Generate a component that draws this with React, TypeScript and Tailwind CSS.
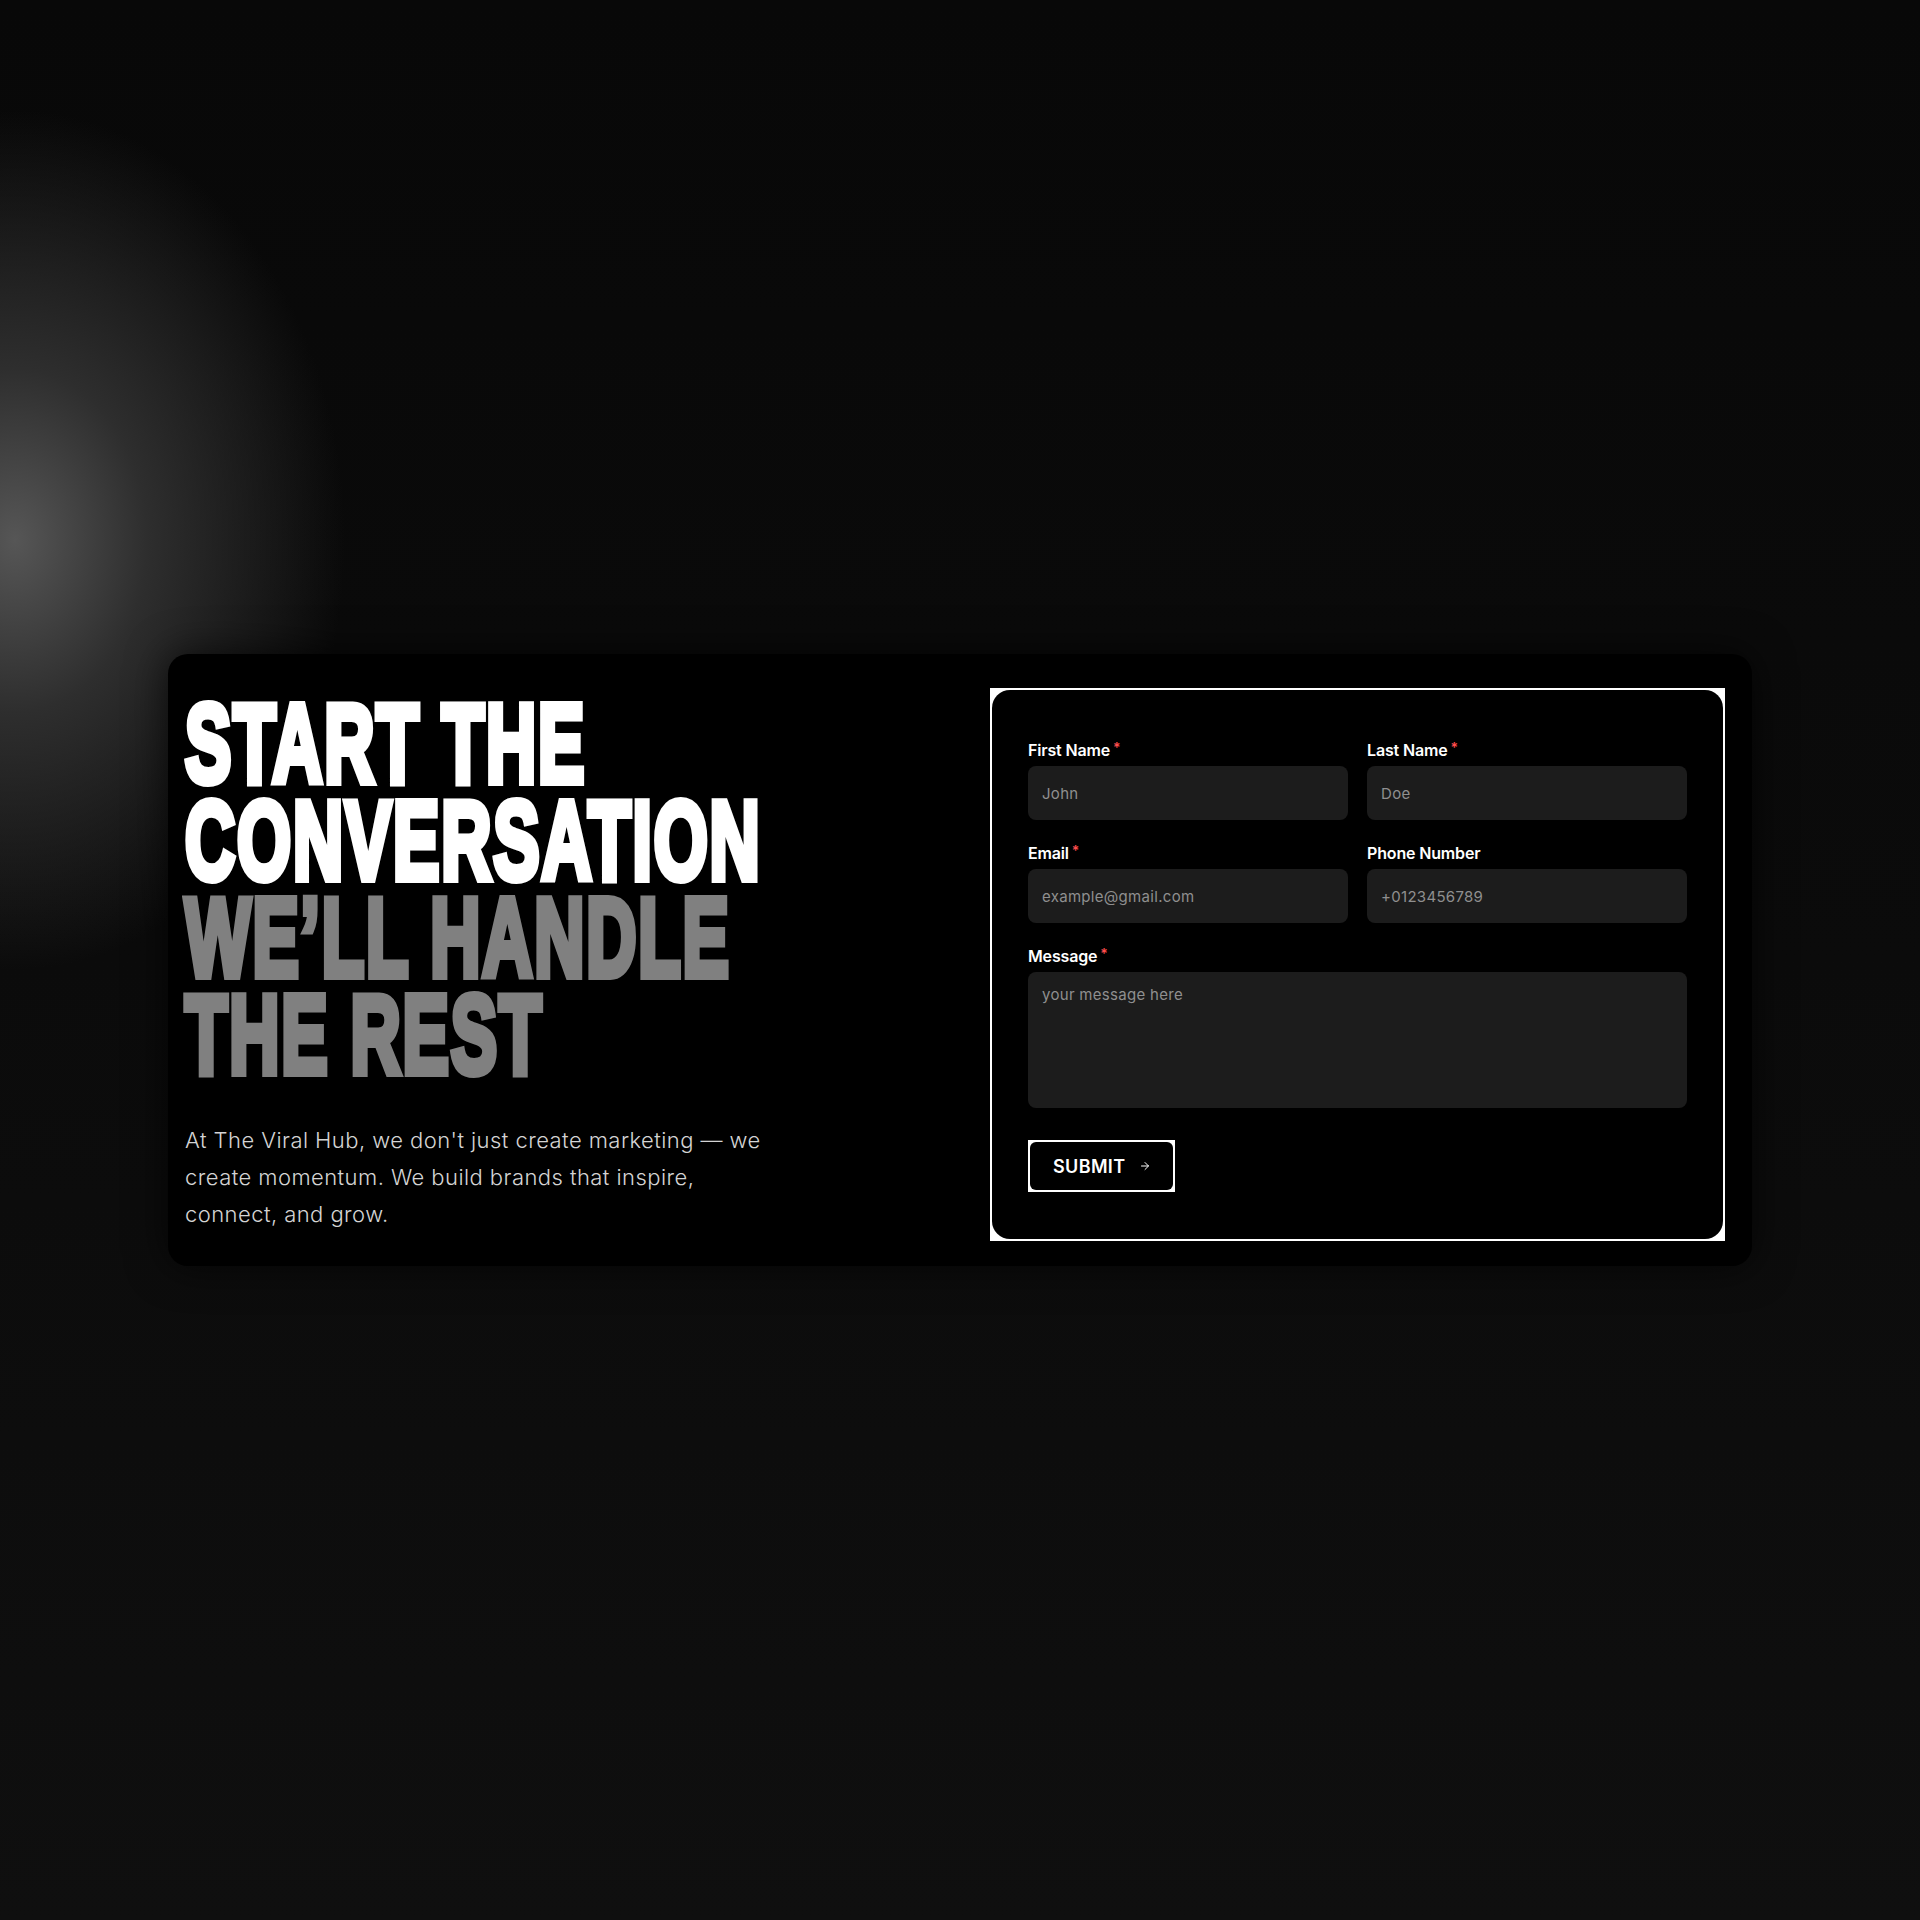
import { ArrowRight } from 'lucide-react'

/** 表单字段 */
function Field({
  label,
  placeholder,
  required,
}: {
  label: string
  placeholder: string
  required?: boolean
}) {
  return (
    <label className="flex flex-col gap-[6px]">
      <span className="flex items-start h-5 text-[16px] leading-5 font-semibold tracking-[-0.01em] text-white">
        {label}
        {required && <span className="ml-[3px] text-[14px] leading-4 text-[#ff4d4d]">*</span>}
      </span>
      <input
        placeholder={placeholder}
        className="h-[54px] rounded-[8px] bg-[#1c1c1c] px-[14px] text-[15px] tracking-[0.02em] text-white placeholder:text-[#8f8f8f] outline-none"
      />
    </label>
  )
}

export default function App() {
  return (
    <div className="min-h-[1920px] w-full flex items-center justify-center bg-[#0b0b0b] bg-[radial-gradient(ellipse_330px_430px_at_15px_540px,#565656_0%,#2e2e2e_40%,rgba(11,11,11,0)_100%),linear-gradient(180deg,#080808_0%,#0b0b0b_50%,#0f0f0f_100%)] font-['Inter','Liberation_Sans',sans-serif]">
      <section className="w-[1584px] rounded-[20px] bg-black flex items-start justify-between pl-[17px] pr-[27px] pt-[34px] pb-[25px] shadow-[0_0_40px_rgba(0,0,0,0.7)]">
        {/* 左侧：标题 + 简介 */}
        <div className="flex-1 min-w-0 pt-[7px]">
          <h1 className="whitespace-nowrap origin-left scale-x-[0.62] font-['Liberation_Sans',Arial,sans-serif] font-bold uppercase text-[112px] leading-[97px] tracking-[3px] [-webkit-text-stroke:8px_currentColor]">
            <span className="block text-white">Start the</span>
            <span className="block text-white">Conversation</span>
            <span className="block text-[#808080]">We’ll handle</span>
            <span className="block text-[#808080]">the rest</span>
          </h1>
          <p className="mt-[39px] w-[592px] text-[22px] leading-[37px] font-light tracking-[0.02em] text-[#d4d4d4]">
            At The Viral Hub, we don't just create marketing — we create momentum. We build brands that inspire,
            connect, and grow.
          </p>
        </div>

        {/* 右侧：联系表单 */}
        <div className="w-[735px] bg-white p-[2px]">
          <form className="rounded-[18px] bg-black pt-[50px] px-9 pb-[47px]" onSubmit={(e) => e.preventDefault()}>
            <div className="grid grid-cols-2 gap-x-[19px] gap-y-[23px]">
              <Field label="First Name" placeholder="John" required />
              <Field label="Last Name" placeholder="Doe" required />
              <Field label="Email" placeholder="example@gmail.com" required />
              <Field label="Phone Number" placeholder="+0123456789" />
              <label className="col-span-2 flex flex-col gap-[6px]">
                <span className="flex items-start h-5 text-[16px] leading-5 font-semibold tracking-[-0.01em] text-white">
                  Message
                  <span className="ml-[3px] text-[14px] leading-4 text-[#ff4d4d]">*</span>
                </span>
                <textarea
                  placeholder="your message here"
                  className="h-[136px] resize-none rounded-[8px] bg-[#1c1c1c] px-[14px] pt-[13px] text-[15px] leading-5 tracking-[0.02em] text-white placeholder:text-[#8f8f8f] outline-none"
                />
              </label>
            </div>
            <button type="submit" className="mt-8 block h-[52px] w-[147px] bg-white p-[2px]">
              <span className="flex h-full items-center gap-[14px] rounded-[6px] bg-black pl-[23px] text-[18px] font-semibold tracking-[0.02em] text-white">
                SUBMIT
                <ArrowRight className="h-3 w-3" strokeWidth={2} />
              </span>
            </button>
          </form>
        </div>
      </section>
    </div>
  )
}
